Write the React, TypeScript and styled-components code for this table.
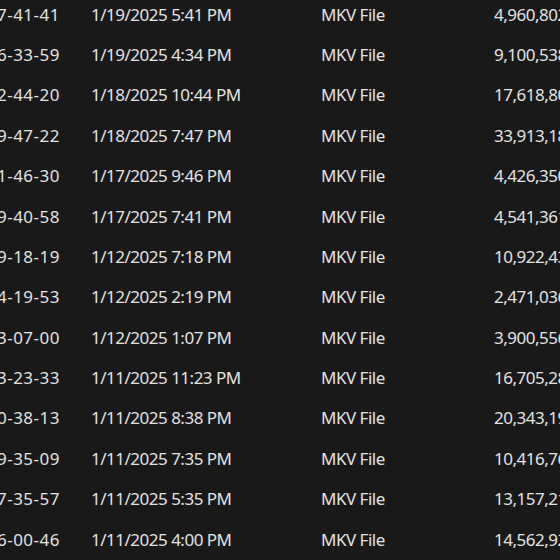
import styled, { createGlobalStyle } from 'styled-components'

interface FileRow {
  name: string
  modified: string
  type: string
  size: string
}

const files: FileRow[] = [
  { name: '2025-01-19 17-41-41', modified: '1/19/2025 5:41 PM', type: 'MKV File', size: '4,960,802 KB' },
  { name: '2025-01-19 16-33-59', modified: '1/19/2025 4:34 PM', type: 'MKV File', size: '9,100,538 KB' },
  { name: '2025-01-18 22-44-20', modified: '1/18/2025 10:44 PM', type: 'MKV File', size: '17,618,805 KB' },
  { name: '2025-01-18 19-47-22', modified: '1/18/2025 7:47 PM', type: 'MKV File', size: '33,913,184 KB' },
  { name: '2025-01-17 21-46-30', modified: '1/17/2025 9:46 PM', type: 'MKV File', size: '4,426,350 KB' },
  { name: '2025-01-17 19-40-58', modified: '1/17/2025 7:41 PM', type: 'MKV File', size: '4,541,361 KB' },
  { name: '2025-01-12 19-18-19', modified: '1/12/2025 7:18 PM', type: 'MKV File', size: '10,922,437 KB' },
  { name: '2025-01-12 14-19-53', modified: '1/12/2025 2:19 PM', type: 'MKV File', size: '2,471,036 KB' },
  { name: '2025-01-12 13-07-00', modified: '1/12/2025 1:07 PM', type: 'MKV File', size: '3,900,556 KB' },
  { name: '2025-01-11 23-23-33', modified: '1/11/2025 11:23 PM', type: 'MKV File', size: '16,705,282 KB' },
  { name: '2025-01-11 20-38-13', modified: '1/11/2025 8:38 PM', type: 'MKV File', size: '20,343,195 KB' },
  { name: '2025-01-11 19-35-09', modified: '1/11/2025 7:35 PM', type: 'MKV File', size: '10,416,763 KB' },
  { name: '2025-01-11 17-35-57', modified: '1/11/2025 5:35 PM', type: 'MKV File', size: '13,157,214 KB' },
  { name: '2025-01-11 16-00-46', modified: '1/11/2025 4:00 PM', type: 'MKV File', size: '14,562,921 KB' },
]

const GlobalStyle = createGlobalStyle`
  html, body {
    margin: 0;
    padding: 0;
    background: #191919;
    overflow: hidden;
  }
`

const Pane = styled.div`
  width: 560px;
  height: 560px;
  overflow: hidden;
  background: #191919;
  color: #e2e2e2;
  font-family: "Noto Sans", "Open Sans", sans-serif;
  font-size: 17px;
  letter-spacing: -0.5px;
`

// the view is scrolled a bit, so the first row starts above the top edge
const List = styled.div`
  display: flex;
  flex-direction: column;
  margin-top: -6px;
`

const Row = styled.div`
  display: grid;
  grid-template-columns: 60px 230px 174px 1fr;
  align-items: center;
  height: 40.38px;
  white-space: nowrap;
`

// name column is scrolled out to the left, only the tail of each name shows
const NameCell = styled.div`
  display: flex;
  justify-content: flex-end;
  overflow: hidden;
  letter-spacing: 0.5px;
`

const Cell = styled.div<{ $indent?: number }>`
  padding-left: ${p => p.$indent ?? 0}px;
  overflow: hidden;
`

export default function App() {
  return (
    <>
      <GlobalStyle />
      <Pane>
        <List>
          {files.map(f => (
            <Row key={f.name}>
              <NameCell><span>{f.name}</span></NameCell>
              <Cell $indent={31}>{f.modified}</Cell>
              <Cell $indent={31}>{f.type}</Cell>
              <Cell $indent={30}>{f.size}</Cell>
            </Row>
          ))}
        </List>
      </Pane>
    </>
  )
}
